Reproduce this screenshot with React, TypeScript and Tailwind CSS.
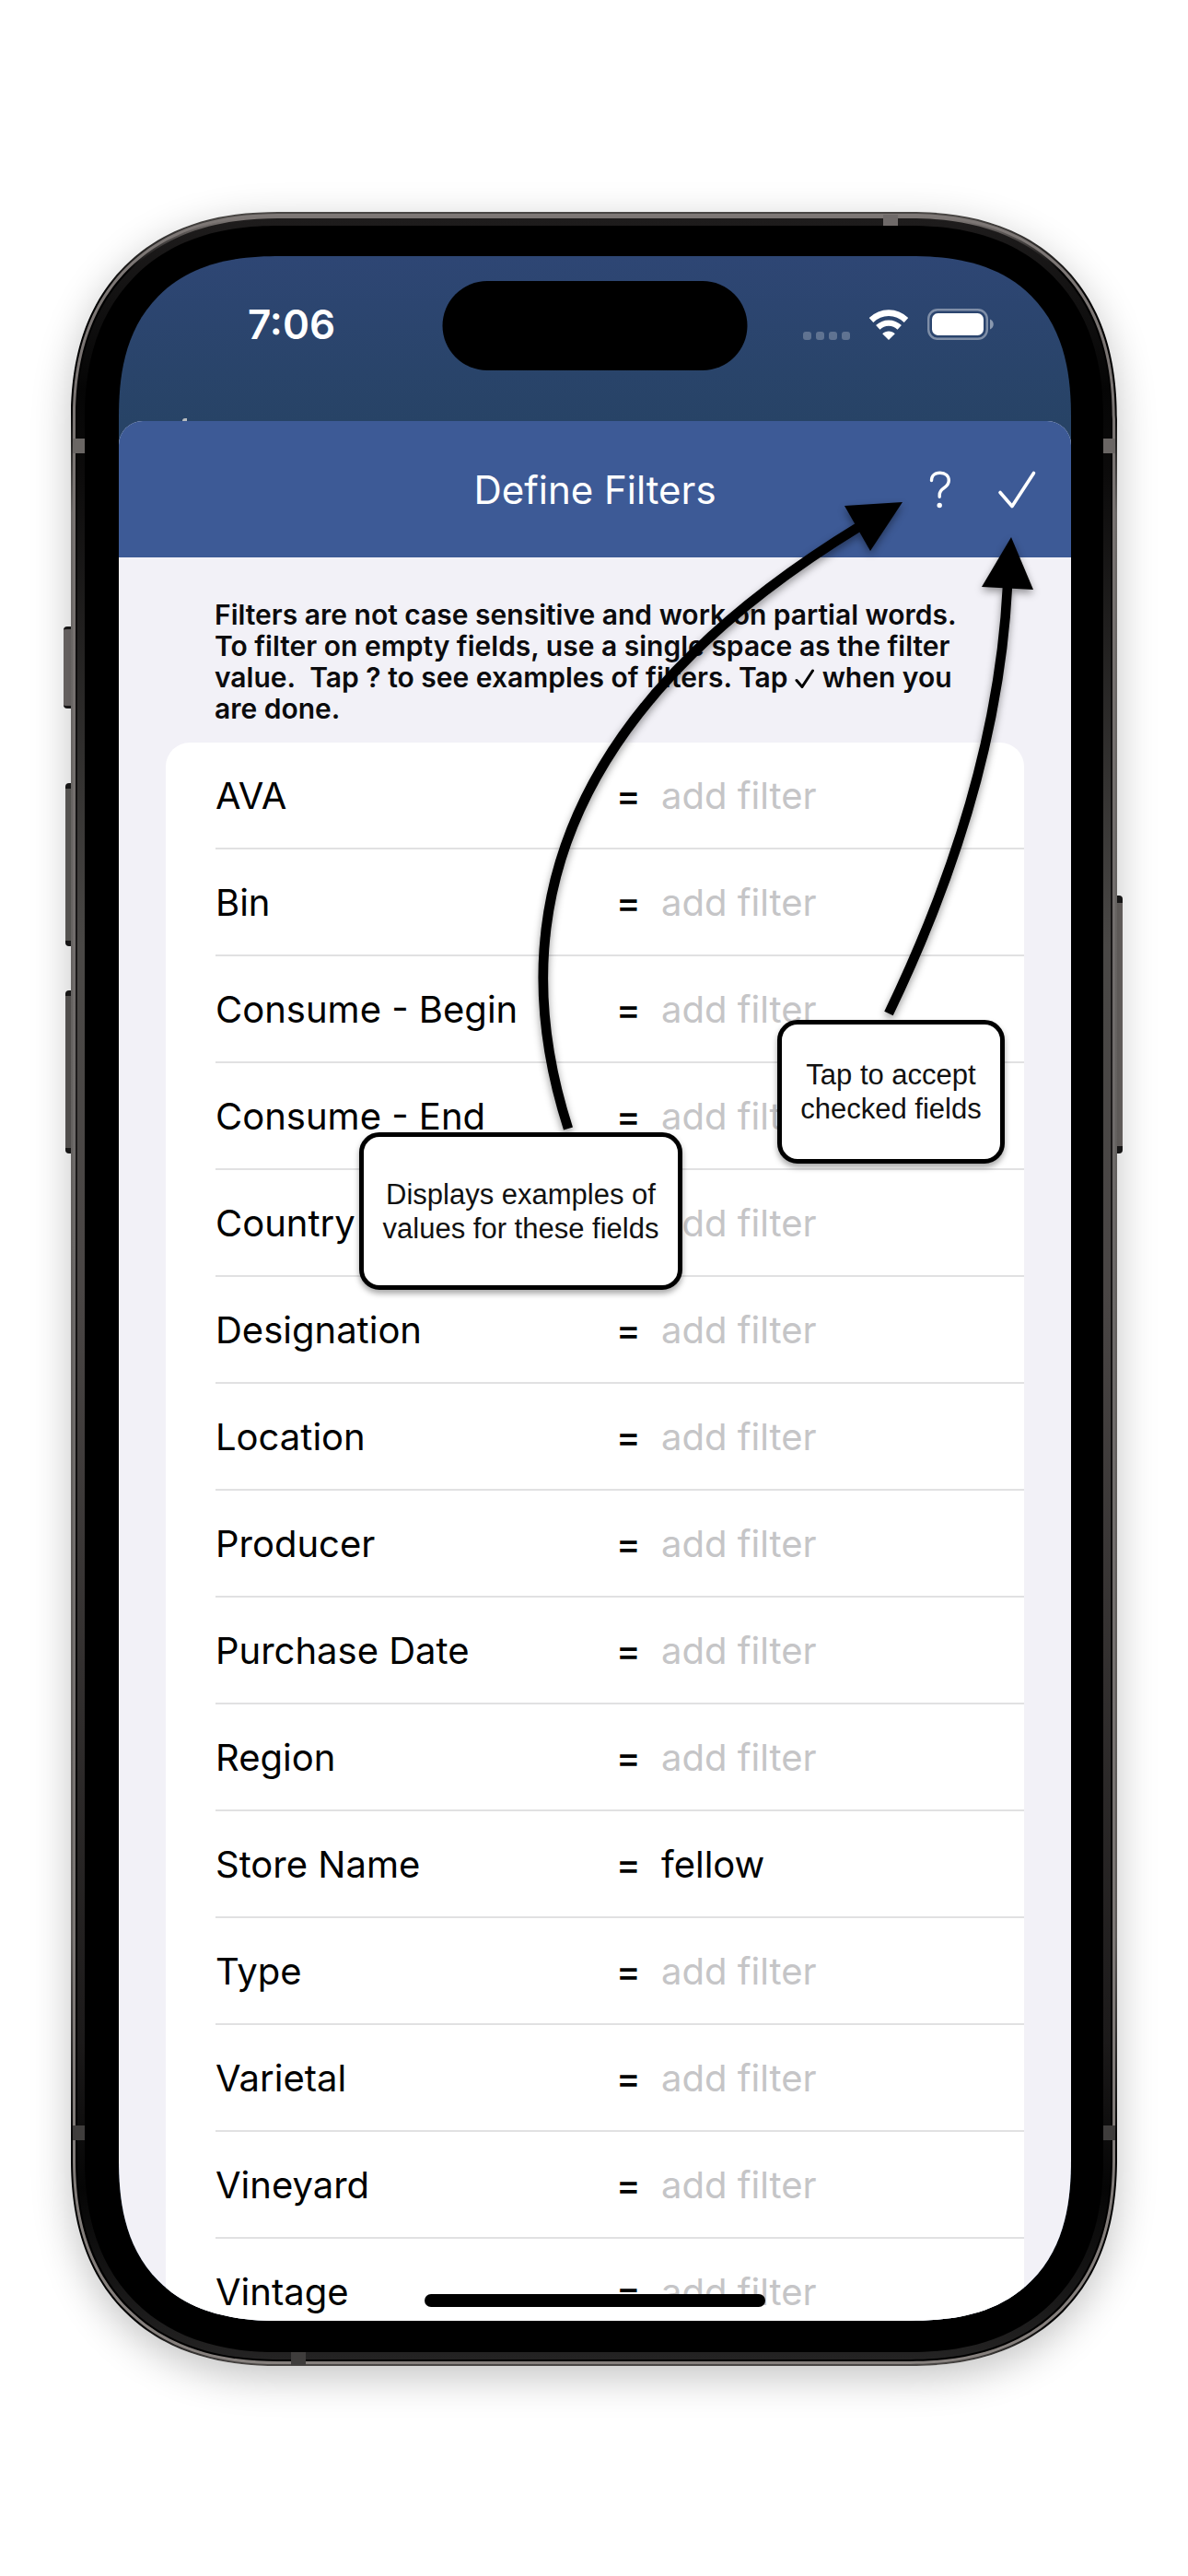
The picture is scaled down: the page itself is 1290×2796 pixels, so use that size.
import { useState } from "react";

type FilterField = { id: string; label: string; value?: string };

const FIELDS: FilterField[] = [
  { id: "ava", label: "AVA" },
  { id: "bin", label: "Bin" },
  { id: "consume-begin", label: "Consume - Begin" },
  { id: "consume-end", label: "Consume - End" },
  { id: "country", label: "Country" },
  { id: "designation", label: "Designation" },
  { id: "location", label: "Location" },
  { id: "producer", label: "Producer" },
  { id: "purchase-date", label: "Purchase Date" },
  { id: "region", label: "Region" },
  { id: "store-name", label: "Store Name", value: "fellow" },
  { id: "type", label: "Type" },
  { id: "varietal", label: "Varietal" },
  { id: "vineyard", label: "Vineyard" },
  { id: "vintage", label: "Vintage" },
];

function WifiIcon() {
  return (
    <svg viewBox="0 0 44 33" className="h-[33px] w-[44px]" fill="none" aria-hidden="true">
      <path d="M3 11.5C14 1 30 1 41 11.5" stroke="#fff" strokeWidth="6.6" />
      <path d="M10.3 19.3C17 13 27 13 33.7 19.3" stroke="#fff" strokeWidth="6.4" />
      <path d="M22 33L15.2 26.2C19 22.6 25 22.6 28.8 26.2Z" fill="#fff" />
    </svg>
  );
}

function BatteryIcon() {
  return (
    <svg viewBox="0 0 72 34" className="h-[34px] w-[72px]" fill="none" aria-hidden="true">
      <rect x="1.2" y="1.2" width="63.6" height="31.6" rx="10" stroke="#fff" strokeOpacity="0.4" strokeWidth="2.4" />
      <rect x="5" y="5" width="56" height="24" rx="6.5" fill="#fff" />
      <path d="M68 11.5C73 13.5 73 20.5 68 22.5Z" fill="#fff" fillOpacity="0.45" />
    </svg>
  );
}

function QuestionIcon() {
  return (
    <svg viewBox="0 0 24 42" className="h-[42px] w-[24px]" fill="none" aria-hidden="true">
      <path
        d="M2.5 10.5C2.5 5 6.5 2.2 11.8 2.2C17.5 2.2 21.3 5.6 21.3 10.6C21.3 14.2 19.5 16.4 15.9 18.7C12.4 21 11.2 22.9 11.2 26.2V28.3"
        stroke="#fff"
        strokeWidth="3.4"
        strokeLinecap="round"
      />
      <circle cx="11.2" cy="37.5" r="2.7" fill="#fff" />
    </svg>
  );
}

function CheckIcon() {
  return (
    <svg viewBox="0 0 42 42" className="h-[42px] w-[42px]" fill="none" aria-hidden="true">
      <path d="M3 23.5L16 38.5L39.5 2.5" stroke="#fff" strokeWidth="3.6" strokeLinecap="round" strokeLinejoin="round" />
    </svg>
  );
}

function InlineCheck() {
  return (
    <svg viewBox="0 0 22 22" className="inline-block h-[22px] w-[22px] align-[-2px]" fill="none" role="img" aria-label="✓">
      <path d="M2 12.5L8 19.5L19.5 2" stroke="#000" strokeWidth="3" strokeLinecap="round" strokeLinejoin="round" />
    </svg>
  );
}

function StatusBar() {
  return (
    <div className="relative flex h-[179px] shrink-0 items-start justify-between pt-[50px] pr-[84px] pl-[140px]">
      <time className="text-[44px] leading-[48px] font-semibold text-white">7:06</time>
      <div className="absolute top-[27px] left-1/2 h-[97px] w-[331px] -translate-x-1/2 rounded-full bg-black" />
      <div className="flex items-end gap-5 pt-[7px]">
        <div className="flex gap-[5px]">
          <span className="size-[9px] rounded-[3px] bg-white/25" />
          <span className="size-[9px] rounded-[3px] bg-white/25" />
          <span className="size-[9px] rounded-[3px] bg-white/25" />
          <span className="size-[9px] rounded-[3px] bg-white/25" />
        </div>
        <WifiIcon />
        <BatteryIcon />
      </div>
      <span className="absolute bottom-0 left-[69px] h-[3px] w-[5px] rounded-tl-full bg-[#b9bdc0]" />
    </div>
  );
}

function SheetHeader() {
  return (
    <header className="grid h-[148px] grid-cols-[1fr_auto_1fr] items-center bg-[#3d5a96] px-[38px] pt-0.5">
      <span />
      <h1 className="text-[42px] leading-[52px] text-white">Define Filters</h1>
      <div className="flex items-center justify-end gap-[50px]">
        <button type="button" aria-label="Filter examples">
          <QuestionIcon />
        </button>
        <button type="button" aria-label="Accept filters">
          <CheckIcon />
        </button>
      </div>
    </header>
  );
}

function FilterRow({ field }: { field: FilterField }) {
  const [value, setValue] = useState(field.value ?? "");
  return (
    <li className="ml-[54px] grid h-[116px] grid-cols-[435px_49px_1fr] items-center border-b-2 border-[#e1e1e2] pt-0.5 text-[40px] leading-[48px] text-black">
      <label htmlFor={field.id}>{field.label}</label>
      <span className="font-medium">=</span>
      <input
        id={field.id}
        value={value}
        onChange={(e) => setValue(e.target.value)}
        placeholder="add filter"
        className="w-full min-w-0 bg-transparent outline-none placeholder:text-[#c5c5c7]"
      />
    </li>
  );
}

function Screen() {
  return (
    <main className="relative flex h-full flex-col overflow-hidden rounded-[176px] bg-linear-to-b from-[#2e4674] to-[#274366] to-8% [corner-shape:superellipse(1.3)]">
      <StatusBar />
      <form className="min-h-0 flex-1 overflow-hidden rounded-t-[26px] bg-[#f2f1f7]" onSubmit={(e) => e.preventDefault()}>
        <SheetHeader />
        <div className="px-[51px] pt-[45px]">
          <p className="pb-5 pl-[53px] text-[30px] leading-[34px] font-semibold whitespace-nowrap text-[#0b0b0d]">
            Filters are not case sensitive and work on partial words.
            <br />
            To filter on empty fields, use a single space as the filter
            <br />
            value.&nbsp; Tap ? to see examples of filters. Tap <InlineCheck /> when you
            <br />
            are done.
          </p>
          <ul className="overflow-hidden rounded-t-[26px] bg-white">
            {FIELDS.map((field) => (
              <FilterRow key={field.id} field={field} />
            ))}
          </ul>
        </div>
      </form>
      <div className="absolute bottom-[15px] left-1/2 h-[14px] w-[370px] -translate-x-1/2 rounded-full bg-black" />
    </main>
  );
}

function Phone() {
  return (
    <div className="relative aspect-[1136/2338] w-full">
      <span className="absolute top-[450px] -left-2 h-[89px] w-3 rounded-l-sm border-y-3 border-[#1a1919] bg-[#6f6a69]" />
      <span className="absolute top-[620px] -left-1.5 h-[177px] w-3 rounded-l-sm border-y-6 border-[#1a1919] bg-[#5f5d5a]" />
      <span className="absolute top-[845px] -left-1.5 h-[177px] w-3 rounded-l-sm border-y-6 border-[#1a1919] bg-[#5a5755]" />
      <span className="absolute top-[742px] -right-1.5 h-[280px] w-3 rounded-r-sm border-y-8 border-[#1a1919] bg-[#6a6563]" />
      <div className="relative h-full rounded-[225px] bg-[linear-gradient(to_bottom,#4a4745_0%,#000_4%,#000_9%,#6a6765_14%,#5c5957_80%,#000_90%,#000_98%,#4a4745_100%)] p-[2px] shadow-[0_12px_44px_rgba(0,0,0,0.24)] [corner-shape:superellipse(1.2)]">
        <div className="h-full rounded-[223px] bg-[linear-gradient(to_bottom,#7d7775,#6b6867_50%,#86807d)] p-[3px] [corner-shape:superellipse(1.2)]">
          <div className="h-full rounded-[220px] bg-[linear-gradient(to_bottom,#7b7573_0,#7b7573_3px,#000_60px,#1d1b1b_40%,#000_80%,#000)] p-[2px] [corner-shape:superellipse(1.2)]">
            <div className="h-full rounded-[218px] bg-[linear-gradient(to_bottom,#1e1c1c,#050505_8%,#0c0b0b_12%,#4a4846_34%,#4a4645_50%,#1c1a1a_85%,#050505_92%,#242323)] p-[8px] [corner-shape:superellipse(1.2)]">
              <div className="h-full rounded-[210px] bg-black pt-[33px] pr-[35px] pb-[34px] pl-[37px] [corner-shape:superellipse(1.2)]">
                <Screen />
              </div>
            </div>
          </div>
        </div>
        <span className="absolute top-[3px] left-[882px] h-[12px] w-4 bg-[#6f6a69]" />
        <span className="absolute bottom-[1px] left-[239px] h-[14px] w-4 bg-[#3f3d3c]" />
        <span className="absolute top-[246px] left-[2px] h-4 w-[13px] bg-[#6a6664]" />
        <span className="absolute top-[246px] right-[2px] h-4 w-[13px] bg-[#6a6664]" />
        <span className="absolute top-[2077px] left-[2px] h-4 w-[13px] bg-[#3f3d3c]" />
        <span className="absolute top-[2077px] right-[2px] h-4 w-[13px] bg-[#3f3d3c]" />
      </div>
    </div>
  );
}

function Arrows() {
  return (
    <svg
      viewBox="0 0 1290 2796"
      className="pointer-events-none absolute inset-0 w-full drop-shadow-[0_4px_4px_rgba(0,0,0,0.4)]"
      fill="none"
      aria-hidden="true"
    >
      <path d="M617 1225Q493 840 934 571" stroke="#000" strokeWidth="10.5" />
      <path d="M980 545L917 549L945 598Z" fill="#000" />
      <path d="M965 1100Q1083 855 1094 636" stroke="#000" strokeWidth="10.5" />
      <path d="M1098 583L1066 637L1122 640Z" fill="#000" />
    </svg>
  );
}

function Callout({ lines, place }: { lines: string[]; place: string }) {
  return (
    <div
      className={`absolute flex flex-col items-center justify-center rounded-[22px] border-[5px] border-black bg-white font-['Liberation_Sans',Arial,sans-serif] text-[31px] leading-[37px] whitespace-nowrap text-[#111] shadow-[0_4px_6px_rgba(0,0,0,0.35)] ${place}`}
    >
      {lines.map((line) => (
        <span key={line}>{line}</span>
      ))}
    </div>
  );
}

export default function App() {
  return (
    <div className="relative bg-white px-[77px] pt-[230px] pb-[228px] font-[Inter,'Liberation_Sans',sans-serif]">
      <Phone />
      <Arrows />
      <Callout lines={["Displays examples of", "values for these fields"]} place="top-[1229px] left-[390px] h-[171px] w-[351px]" />
      <Callout lines={["Tap to accept", "checked fields"]} place="top-[1107px] left-[844px] h-[156px] w-[247px]" />
    </div>
  );
}
